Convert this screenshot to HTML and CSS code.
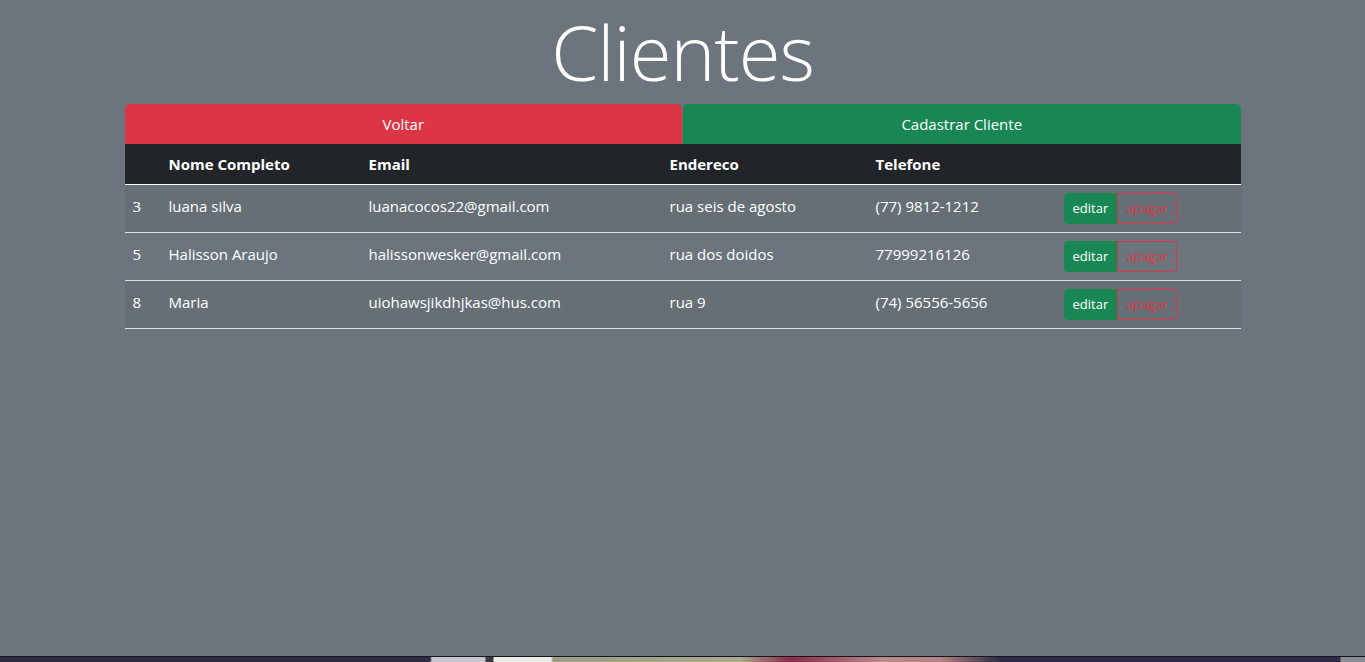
FILE: index.html
```html
<!DOCTYPE html>
<html lang="pt-BR">
<head>
<meta charset="utf-8">
<title>Clientes</title>
<link rel="stylesheet" href="styles.css">
</head>
<body>
<main class="container">
  <h1 class="title">Clientes</h1>
  <div class="actions">
    <a class="btn btn-danger" href="#">Voltar</a>
    <a class="btn btn-success" href="#">Cadastrar Cliente</a>
  </div>
  <table class="table">
    <colgroup>
      <col class="c-id"><col class="c-nome"><col class="c-email"><col class="c-end"><col class="c-tel"><col class="c-act">
    </colgroup>
    <thead>
      <tr><th></th><th>Nome Completo</th><th>Email</th><th>Endereco</th><th>Telefone</th><th></th></tr>
    </thead>
    <tbody>
      <tr class="odd">
        <td>3</td><td>luana silva</td><td>luanacocos22@gmail.com</td><td>rua seis de agosto</td><td>(77) 9812-1212</td>
        <td><div class="btn-group"><a class="sbtn sbtn-edit" href="#">editar</a><a class="sbtn sbtn-del" href="#">apagar</a></div></td>
      </tr>
      <tr>
        <td>5</td><td>Halisson Araujo</td><td>halissonwesker@gmail.com</td><td>rua dos doidos</td><td>77999216126</td>
        <td><div class="btn-group"><a class="sbtn sbtn-edit" href="#">editar</a><a class="sbtn sbtn-del" href="#">apagar</a></div></td>
      </tr>
      <tr class="odd">
        <td>8</td><td>Maria</td><td>uiohawsjikdhjkas@hus.com</td><td>rua 9</td><td>(74) 56556-5656</td>
        <td><div class="btn-group"><a class="sbtn sbtn-edit" href="#">editar</a><a class="sbtn sbtn-del" href="#">apagar</a></div></td>
      </tr>
    </tbody>
  </table>
</main>
<div class="taskbar"></div>
</body>
</html>
```
FILE: styles.css
```css
* { box-sizing: border-box; }
html, body { margin: 0; padding: 0; }
body {
  background: #6c757d;
  color: #fff;
  font-family: "Open Sans", "Noto Sans", "Liberation Sans", sans-serif;
  font-size: 16px;
  line-height: 1.5;
  height: 662px;
  overflow: hidden;
}
.container {
  max-width: 1140px;
  margin: 0 auto;
  padding: 0 12px;
}
.title {
  margin: 0 0 4px;
  padding-top: 4px;
  height: 100px;
  text-align: center;
  font-size: 76px;
  font-weight: 300;
  line-height: 96px;
  letter-spacing: -1px;
}
.actions {
  display: flex;
  gap: 1px;
}
.btn {
  flex: 1;
  height: 40px;
  display: flex;
  align-items: center;
  justify-content: center;
  color: #fff;
  text-decoration: none;
  border-radius: 5px 5px 0 0;
  font-size: 15px;
}
.btn-danger { background: #dc3545; }
.btn-success { background: #198754; }
.table {
  width: 100%;
  border-collapse: collapse;
  table-layout: fixed;
}
.c-id { width: 36px; }
.c-nome { width: 200px; }
.c-email { width: 301px; }
.c-end { width: 206px; }
.c-tel { width: 188px; }
.c-act { width: 185px; }
.table th, .table td {
  text-align: left;
  padding: 8px;
  vertical-align: top;
  white-space: nowrap;
  font-size: 15px;
  line-height: 24px;
}
.table tbody td {
  padding-top: 9px;
  padding-bottom: 7px;
}
.table thead th {
  background: #212529;
  font-weight: 700;
  border-bottom: 1px solid #fff;
}
.table tbody td {
  border-bottom: 1px solid #dee2e6;
}
.table tbody tr.odd td {
  background: rgba(0, 0, 0, 0.05);
}
.table tbody td:last-child {
  padding-top: 8px;
  padding-bottom: 8px;
}
.btn-group {
  display: flex;
}
.sbtn {
  display: inline-block;
  height: 31px;
  padding: 4px 8px;
  font-size: 13px;
  line-height: 21px;
  text-decoration: none;
  border: 1px solid transparent;
}
.sbtn-edit {
  background: #198754;
  border-color: #198754;
  color: #fff;
  border-radius: 4px 0 0 4px;
}
.sbtn-del {
  color: #dc3545;
  border-color: #dc3545;
  border-radius: 0 4px 4px 0;
}
.taskbar {
  position: fixed;
  left: 0;
  right: 0;
  bottom: 0;
  height: 6px;
  border-top: 1px solid #15161c;
  background: linear-gradient(90deg,
    #2b2a3e 0, #2e2c44 430px,
    #c6c4cc 432px, #c6c4cc 485px,
    #3a3842 486px, #3a3842 493px,
    #ecebe6 494px, #ecebe6 551px,
    #9f9d86 553px, #a8a88a 740px, #8c2a4a 790px, #b88a8a 880px, #b48282 940px,
    #2d2b45 1000px, #2d2b45 1340px,
    #8a8c94 1341px, #8a8c94 1365px);
}
```
